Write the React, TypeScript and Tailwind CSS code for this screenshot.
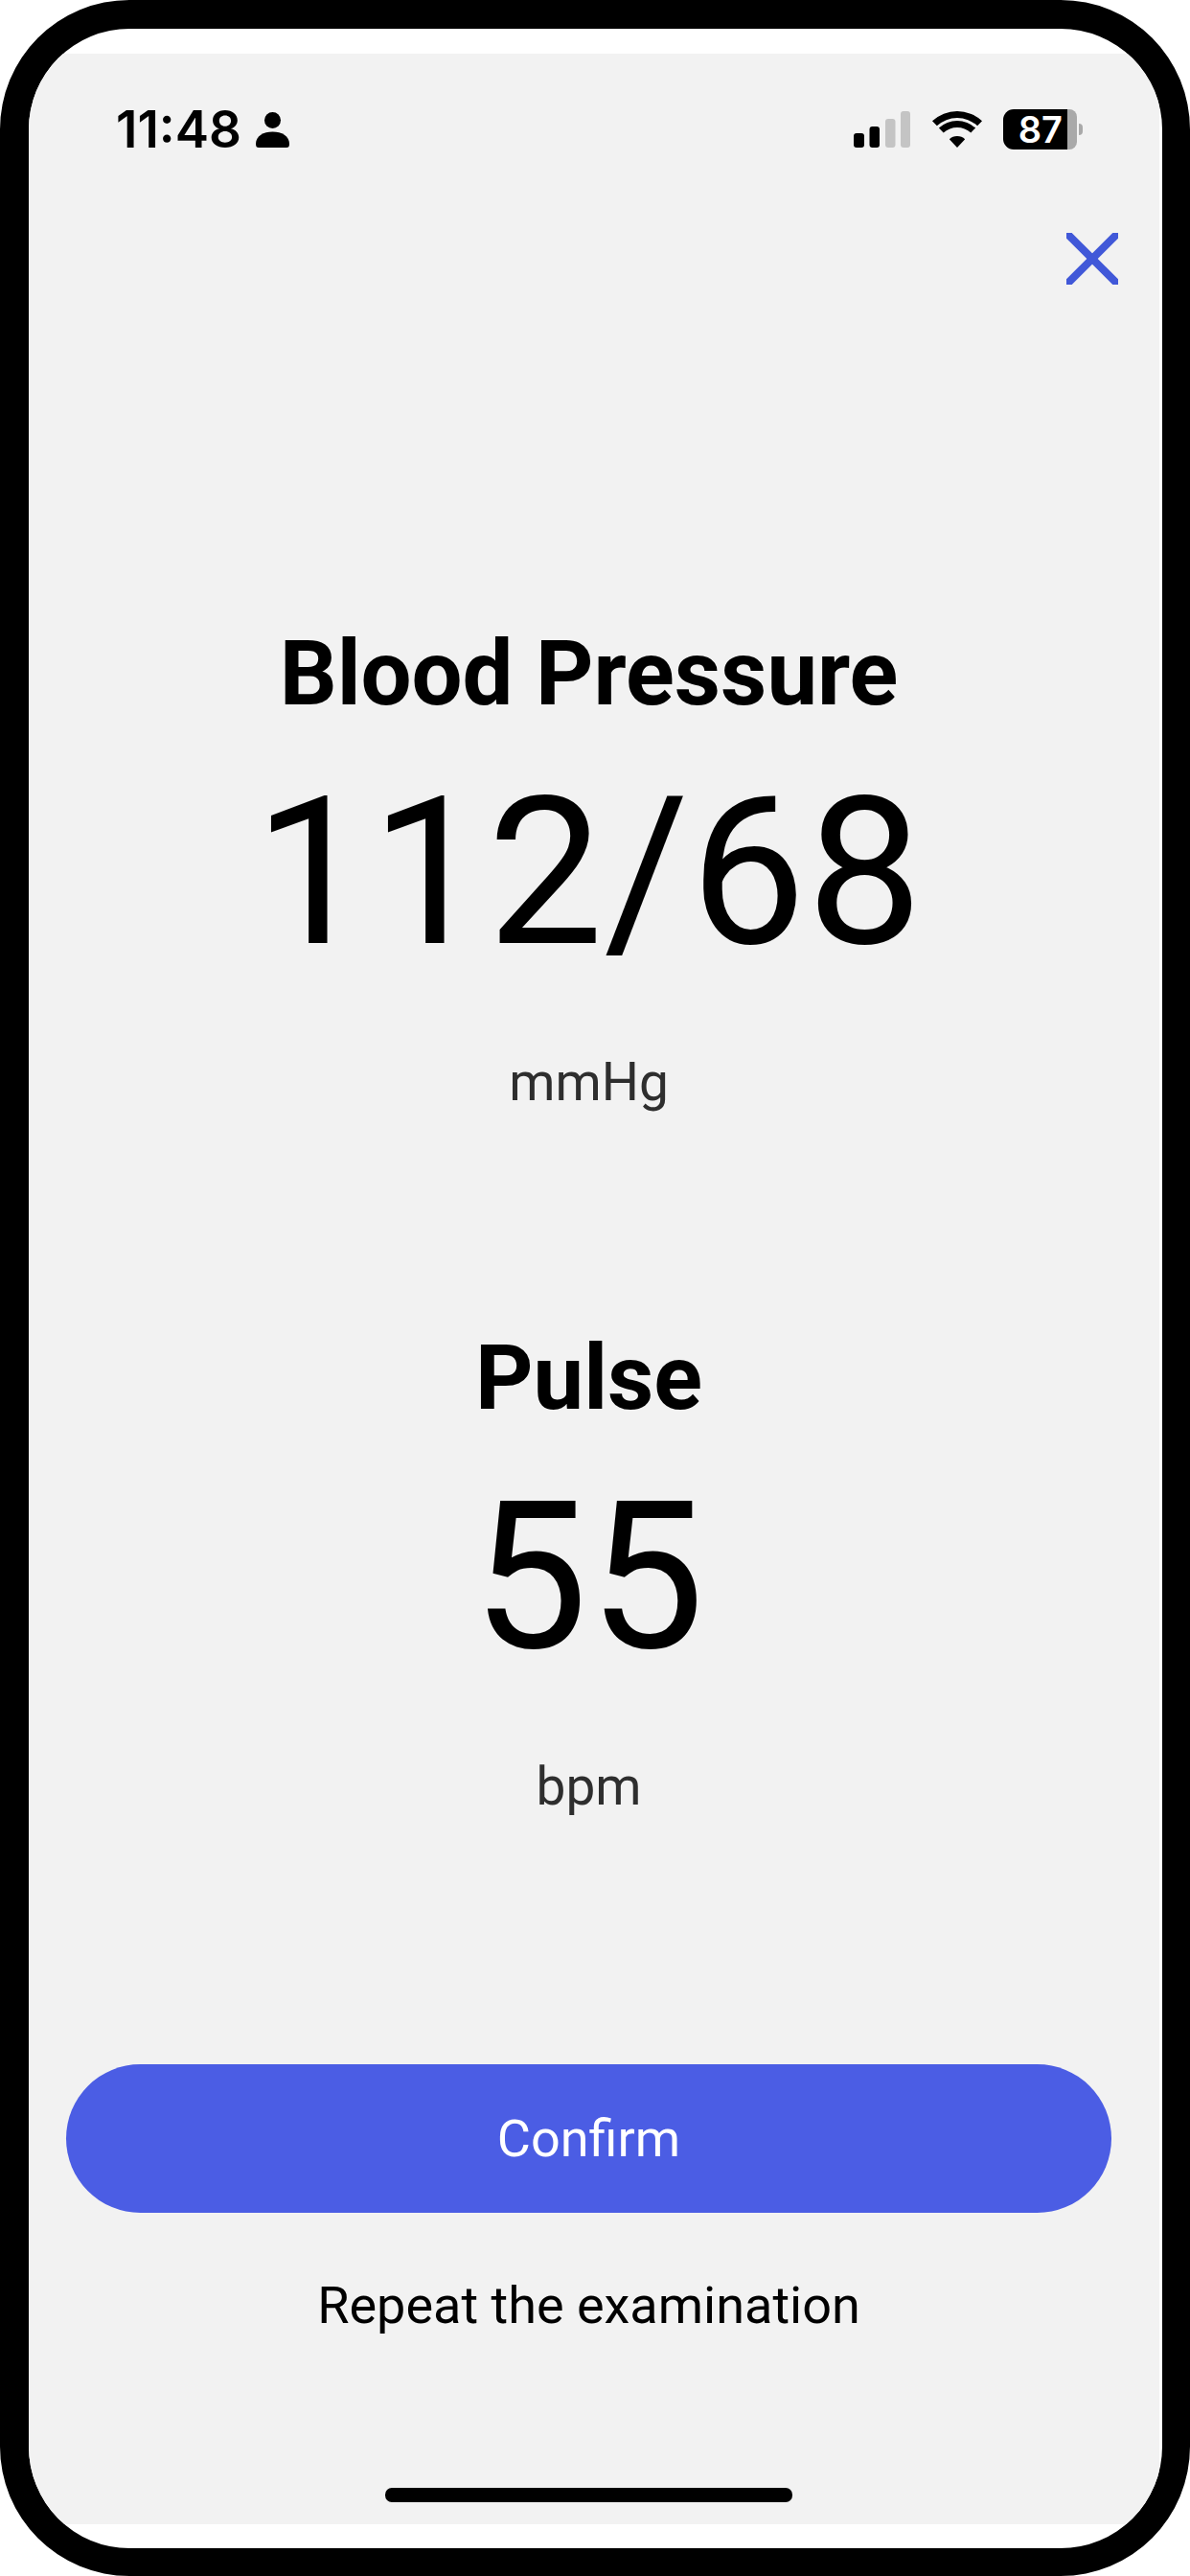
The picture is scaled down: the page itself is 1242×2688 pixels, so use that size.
function PersonIcon() {
  return (
    <svg width="35" height="37" viewBox="0 0 35 37" className="ml-[15px]" fill="#000">
      <circle cx="17.5" cy="8.5" r="8.5" />
      <path d="M0 33C0 25 8 20.5 17.5 20.5C27 20.5 35 25 35 33C35 36 34 37 32 37H3C1 37 0 36 0 33Z" />
    </svg>
  );
}

function SignalIcon() {
  return (
    <svg width="59" height="38" viewBox="0 0 59 38">
      <rect x="0" y="23" width="11" height="15" rx="3" fill="#000" />
      <rect x="16.5" y="16" width="10.5" height="22" rx="3" fill="#000" />
      <rect x="33" y="8" width="10.5" height="30" rx="3" fill="#c4c4c4" />
      <rect x="49" y="0" width="10" height="38" rx="3" fill="#c4c4c4" />
    </svg>
  );
}

function WifiIcon() {
  return (
    <svg width="52" height="38" viewBox="0 0 52 38" fill="#000">
      <path d="M0 10.3A38 38 0 0 1 52 10.3L47.1 15.3A31 31 0 0 0 4.9 15.3Z" />
      <path d="M6.9 17.5A28 28 0 0 1 45.1 17.5L40.3 22.6A21 21 0 0 0 11.7 22.6Z" />
      <path d="M17.8 29.2A12 12 0 0 1 34.2 29.2L26 38Z" />
    </svg>
  );
}

function Battery() {
  return (
    <div className="ml-[22px] flex items-center">
      <div className="flex h-[42px] w-[67px] items-center justify-end rounded-l-[11px] bg-black pr-[5px] font-['Inter',sans-serif] text-[38px] leading-[42px] font-semibold text-white">
        87
      </div>
      <div className="h-[42px] w-[10px] rounded-r-[8px] bg-[#a9a9a9]" />
      <div className="ml-[2px] h-[12px] w-[4px] rounded-r-full bg-[#a9a9a9]" />
    </div>
  );
}

function CloseIcon() {
  return (
    <svg width="54" height="54" viewBox="0 0 54 54" stroke="#4158d8" strokeWidth="8">
      <line x1="0" y1="0" x2="54" y2="54" />
      <line x1="54" y1="0" x2="0" y2="54" />
    </svg>
  );
}

function Reading({ title, value, unit, className }: { title: string; value: string; unit: string; className: string }) {
  return (
    <section className={`flex flex-col items-center ${className}`}>
      <h2 className="text-[94px] leading-[100px] font-bold text-black">{title}</h2>
      <div className="mt-[48px] text-[215px] leading-[220px] font-normal tracking-[1px] text-black [font-kerning:none]">{value}</div>
      <div className="mt-[78px] text-[55px] leading-[60px] font-normal text-[#2e2e2e]">{unit}</div>
    </section>
  );
}

export default function App() {
  return (
    <div className="h-[2688px] w-[1242px] overflow-hidden rounded-[135px] border-t-[30px] border-r-[29px] border-b-[29px] border-l-[30px] border-black bg-white pt-[26px] pr-[3px] pb-[25px] font-['Roboto',sans-serif]">
      <main className="flex h-full flex-col bg-[#f2f2f2]">
        {/* status bar */}
        <div className="mt-[58px] flex h-[42px] items-center justify-between pr-[80px] pl-[91px]">
          <div className="flex items-center">
            <span className="font-['Inter',sans-serif] text-[53px] leading-none font-semibold text-black">11:48</span>
            <PersonIcon />
          </div>
          <div className="flex items-center">
            <SignalIcon />
            <div className="ml-[23px]">
              <WifiIcon />
            </div>
            <Battery />
          </div>
        </div>

        <div className="mt-[87px] flex justify-end pr-[43px]">
          <CloseIcon />
        </div>

        <div className="pr-[50px] pl-[39px]">
          <Reading title="Blood Pressure" value="112/68" unit="mmHg" className="mt-[356px]" />
          <Reading title="Pulse" value="55" unit="bpm" className="mt-[229px]" />

          <button className="mt-[260px] flex h-[155px] w-full items-center justify-center rounded-full bg-[#4b5de4] text-[54px] leading-[64px] font-normal text-white">
            Confirm
          </button>
          <div className="mt-[65px] text-center text-[54px] leading-[64px] font-normal text-black">
            Repeat the examination
          </div>
          <div className="mx-auto mt-[158px] h-[15px] w-[425px] rounded-[7px] bg-black" />
        </div>
      </main>
    </div>
  );
}
